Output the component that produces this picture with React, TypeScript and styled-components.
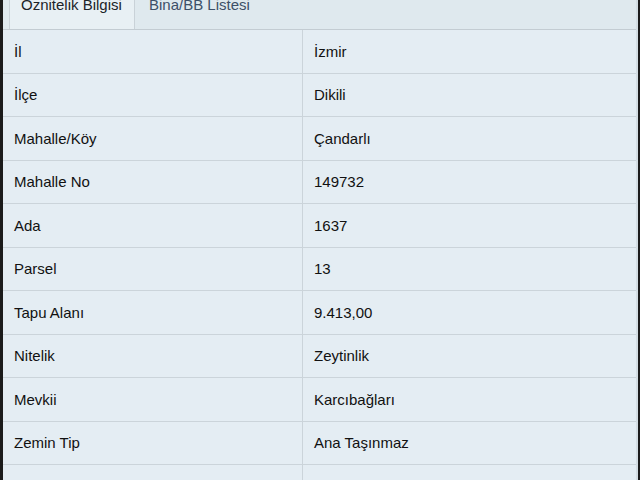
import { Fragment } from 'react';
import styled, { createGlobalStyle } from 'styled-components';

const GlobalStyle = createGlobalStyle`
  html, body {
    margin: 0;
    padding: 0;
    background: #1b1b1b;
    overflow: hidden;
  }
`;

const Page = styled.div`
  margin: 0 2px 0 3px;
  height: 480px;
  background: #e4edf3;
  border-right: 2px solid #d3dde3;
  font-family: 'Liberation Sans', Arial, sans-serif;
  overflow: hidden;
`;

const TabBar = styled.div`
  display: flex;
  height: 29px;
  padding-left: 6px;
  background: #dfe9ee;
  border-bottom: 1px solid #c3ccd2;
`;

const Tab = styled.div<{ $active?: boolean }>`
  width: ${(p) => (p.$active ? '126px' : 'auto')};
  padding-left: ${(p) => (p.$active ? '11px' : '14px')};
  box-sizing: border-box;
  background: ${(p) => (p.$active ? '#e8f0f4' : 'transparent')};
  border-left: ${(p) => (p.$active ? '1px solid #c9d2d8' : 'none')};
  border-right: ${(p) => (p.$active ? '1px solid #c9d2d8' : 'none')};
  color: ${(p) => (p.$active ? '#202428' : '#3d5068')};
  font-size: 15px;
  line-height: 15px;
  white-space: nowrap;
`;

const TabLabel = styled.div`
  margin-top: -3px;
`;

const Table = styled.div`
  display: grid;
  grid-template-columns: 299px 1fr;
`;

const Cell = styled.div<{ $value?: boolean }>`
  height: 43.5px;
  box-sizing: border-box;
  display: flex;
  align-items: center;
  padding-left: 11px;
  border-bottom: 1px solid #cbd4da;
  border-left: ${(p) => (p.$value ? '1px solid #cbd4da' : 'none')};
  color: #111;
  font-size: 15px;
`;

const rows: [string, string][] = [
  ['İl', 'İzmir'],
  ['İlçe', 'Dikili'],
  ['Mahalle/Köy', 'Çandarlı'],
  ['Mahalle No', '149732'],
  ['Ada', '1637'],
  ['Parsel', '13'],
  ['Tapu Alanı', '9.413,00'],
  ['Nitelik', 'Zeytinlik'],
  ['Mevkii', 'Karcıbağları'],
  ['Zemin Tip', 'Ana Taşınmaz'],
  ['', ''],
];

export default function App() {
  return (
    <>
      <GlobalStyle />
      <Page>
        <TabBar>
          <Tab $active>
            <TabLabel>Öznitelik Bilgisi</TabLabel>
          </Tab>
          <Tab>
            <TabLabel>Bina/BB Listesi</TabLabel>
          </Tab>
        </TabBar>
        <Table>
          {rows.map(([label, value], i) => (
            <Fragment key={i}>
              <Cell>{label}</Cell>
              <Cell $value>{value}</Cell>
            </Fragment>
          ))}
        </Table>
      </Page>
    </>
  );
}
